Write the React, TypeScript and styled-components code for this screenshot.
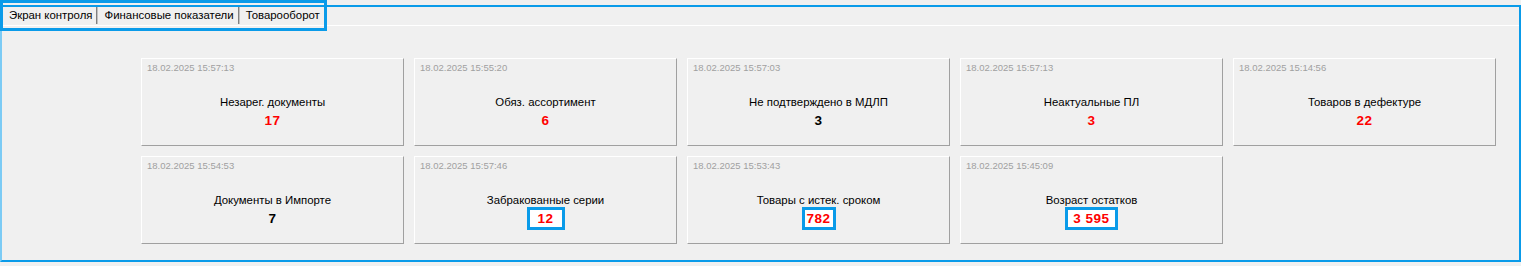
import React from "react";
import styled, { createGlobalStyle } from "styled-components";

const blue = "#0a9be9";

const GlobalStyle = createGlobalStyle`
  html, body {
    margin: 0;
    padding: 0;
    background: #f0f0f0;
    font-family: "Liberation Sans", Arial, sans-serif;
  }
`;

const Screen = styled.div`
  position: relative;
  width: 1521px;
  height: 266px;
  padding-top: 5px;
  box-sizing: border-box;
  background: #f0f0f0;
`;

const Frame = styled.div`
  height: 257px;
  box-sizing: border-box;
  border: 2px solid ${blue};
  border-left-color: #7ccbf5;
  display: flex;
  flex-direction: column;
`;

const TabBar = styled.div`
  display: flex;
  height: 18px;
  padding-left: 2px;
  border-bottom: 1px solid #ffffff;
`;

const Tab = styled.div`
  padding: 1px 4px 0 5px;
  font-size: 11.4px;
  line-height: 14px;
  color: #000;
  border-right: 1px solid #808080;
  box-shadow: 1px 0 0 #c0c0c0;
  margin-right: 2px;
  height: 17px;
  box-sizing: border-box;
  white-space: nowrap;
`;

const TabHighlight = styled.div`
  position: absolute;
  left: 0;
  top: 0;
  width: 327px;
  height: 31px;
  box-sizing: border-box;
  border: 3px solid ${blue};
  pointer-events: none;
`;

const Page = styled.div`
  padding: 32px 0 0 139px;
`;

const Grid = styled.div`
  display: grid;
  grid-template-columns: repeat(5, 263px);
  grid-auto-rows: 88px;
  column-gap: 10px;
  row-gap: 10px;
`;

const Card = styled.div`
  box-sizing: border-box;
  border-top: 1px solid #ffffff;
  border-left: 1px solid #ffffff;
  border-bottom: 1px solid #a0a0a0;
  border-right: 1px solid #a0a0a0;
  padding: 3px 5px 0 5px;
  display: flex;
  flex-direction: column;
`;

const Stamp = styled.div`
  font-size: 9.5px;
  line-height: 11px;
  color: #a0a0a0;
`;

const Title = styled.div`
  margin-top: 22px;
  text-align: center;
  font-size: 11.4px;
  line-height: 14px;
  color: #000;
`;

const ValueRow = styled.div`
  margin-top: 3px;
  display: flex;
  justify-content: center;
`;

const Value = styled.span<{ $red: boolean; $box?: number }>`
  display: inline-block;
  font-size: 13.5px;
  font-weight: bold;
  letter-spacing: 0.5px;
  line-height: 17px;
  text-align: center;
  color: ${(p) => (p.$red ? "#ff0000" : "#000000")};
  ${(p) =>
    p.$box
      ? `
    width: ${p.$box}px;
    background: #ffffff;
    outline: 3px solid ${blue};
  `
      : ""}
`;

interface Item {
  stamp: string;
  title: string;
  value: string;
  red: boolean;
  box?: number;
}

const items: Item[] = [
  { stamp: "18.02.2025 15:57:13", title: "Незарег. документы", value: "17", red: true },
  { stamp: "18.02.2025 15:55:20", title: "Обяз. ассортимент", value: "6", red: true },
  { stamp: "18.02.2025 15:57:03", title: "Не подтверждено в МДЛП", value: "3", red: false },
  { stamp: "18.02.2025 15:57:13", title: "Неактуальные ПЛ", value: "3", red: true },
  { stamp: "18.02.2025 15:14:56", title: "Товаров в дефектуре", value: "22", red: true },
  { stamp: "18.02.2025 15:54:53", title: "Документы в Импорте", value: "7", red: false },
  { stamp: "18.02.2025 15:57:46", title: "Забракованные серии", value: "12", red: true, box: 32 },
  { stamp: "18.02.2025 15:53:43", title: "Товары с истек. сроком", value: "782", red: true, box: 28 },
  { stamp: "18.02.2025 15:45:09", title: "Возраст остатков", value: "3 595", red: true, box: 47 },
];

const tabs = ["Экран контроля", "Финансовые показатели", "Товарооборот"];

export default function App() {
  return (
    <Screen>
      <GlobalStyle />
      <Frame>
        <TabBar>
          {tabs.map((t) => (
            <Tab key={t}>{t}</Tab>
          ))}
        </TabBar>
        <Page>
          <Grid>
            {items.map((it, i) => (
              <Card key={i}>
                <Stamp>{it.stamp}</Stamp>
                <Title>{it.title}</Title>
                <ValueRow>
                  <Value $red={it.red} $box={it.box}>
                    {it.value}
                  </Value>
                </ValueRow>
              </Card>
            ))}
          </Grid>
        </Page>
      </Frame>
      <TabHighlight />
    </Screen>
  );
}
